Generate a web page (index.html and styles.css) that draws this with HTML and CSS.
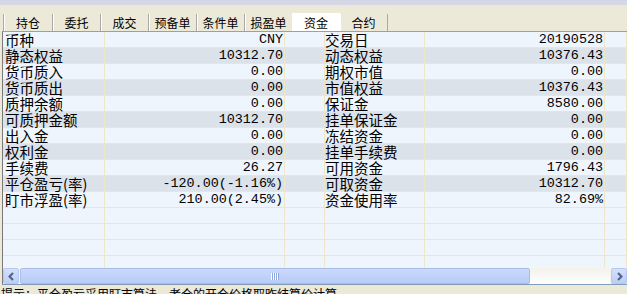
FILE: index.html
```html
<!DOCTYPE html>
<html lang="zh-CN">
<head>
  <meta charset="UTF-8" />
  <title>资金</title>
  <link rel="stylesheet" href="styles.css">
</head>
<body>
  <div class="topband"></div>
  <div class="tabbar">
    <div class="tab first">持仓</div>
    <div class="tab">委托</div>
    <div class="tab">成交</div>
    <div class="tab">预备单</div>
    <div class="tab">条件单</div>
    <div class="tab">损盈单</div>
    <div class="tab active">资金</div>
    <div class="tab last">合约</div>
  </div>

  <div class="grid">
    <div class="rows">
      <div class="row"><div class="c l">币种</div><div class="c v">CNY</div><div class="c e"></div><div class="c l2">交易日</div><div class="c v">20190528</div><div class="c e"></div></div>
      <div class="row alt"><div class="c l">静态权益</div><div class="c v">10312.70</div><div class="c e"></div><div class="c l2">动态权益</div><div class="c v">10376.43</div><div class="c e"></div></div>
      <div class="row"><div class="c l">货币质入</div><div class="c v">0.00</div><div class="c e"></div><div class="c l2">期权市值</div><div class="c v">0.00</div><div class="c e"></div></div>
      <div class="row alt"><div class="c l">货币质出</div><div class="c v">0.00</div><div class="c e"></div><div class="c l2">市值权益</div><div class="c v">10376.43</div><div class="c e"></div></div>
      <div class="row"><div class="c l">质押余额</div><div class="c v">0.00</div><div class="c e"></div><div class="c l2">保证金</div><div class="c v">8580.00</div><div class="c e"></div></div>
      <div class="row alt"><div class="c l">可质押金额</div><div class="c v">10312.70</div><div class="c e"></div><div class="c l2">挂单保证金</div><div class="c v">0.00</div><div class="c e"></div></div>
      <div class="row"><div class="c l">出入金</div><div class="c v">0.00</div><div class="c e"></div><div class="c l2">冻结资金</div><div class="c v">0.00</div><div class="c e"></div></div>
      <div class="row alt"><div class="c l">权利金</div><div class="c v">0.00</div><div class="c e"></div><div class="c l2">挂单手续费</div><div class="c v">0.00</div><div class="c e"></div></div>
      <div class="row"><div class="c l">手续费</div><div class="c v">26.27</div><div class="c e"></div><div class="c l2">可用资金</div><div class="c v">1796.43</div><div class="c e"></div></div>
      <div class="row alt"><div class="c l">平仓盈亏(率)</div><div class="c v">-120.00(-1.16%)</div><div class="c e"></div><div class="c l2">可取资金</div><div class="c v">10312.70</div><div class="c e"></div></div>
      <div class="row"><div class="c l">盯市浮盈(率)</div><div class="c v">210.00(2.45%)</div><div class="c e"></div><div class="c l2">资金使用率</div><div class="c v">82.69%</div><div class="c e"></div></div>
      <div class="row"><div class="c l"></div><div class="c v"></div><div class="c e"></div><div class="c l2"></div><div class="c v"></div><div class="c e"></div></div>
      <div class="row"><div class="c l"></div><div class="c v"></div><div class="c e"></div><div class="c l2"></div><div class="c v"></div><div class="c e"></div></div>
      <div class="row"><div class="c l"></div><div class="c v"></div><div class="c e"></div><div class="c l2"></div><div class="c v"></div><div class="c e"></div></div>
      <div class="row"><div class="c l"></div><div class="c v"></div><div class="c e"></div><div class="c l2"></div><div class="c v"></div><div class="c e"></div></div>
    </div>

    <div class="hscroll">
      <div class="sbtn">
        <svg width="9" height="9" viewBox="0 0 9 9"><path d="M6 1 L2.5 4.5 L6 8" fill="none" stroke="#4d6185" stroke-width="2"/></svg>
      </div>
      <div class="thumb">
        <svg width="9" height="7" viewBox="0 0 9 7"><path d="M0.5 0v7M2.5 0v7M4.5 0v7M6.5 0v7" stroke="#fff" stroke-width="1"/><path d="M1.5 0v7M3.5 0v7M5.5 0v7M7.5 0v7" stroke="#8fa8e0" stroke-width="1"/></svg>
      </div>
      <div class="track"></div>
      <div class="sbtn right">
        <svg width="9" height="9" viewBox="0 0 9 9"><path d="M3 1 L6.5 4.5 L3 8" fill="none" stroke="#4d6185" stroke-width="2"/></svg>
      </div>
    </div>
  </div>

  <div class="status">提示：平仓盈亏采用盯市算法，老仓的开仓价格取昨结算价计算</div>
</body>
</html>
```

FILE: styles.css
```css
html, body {
  margin: 0;
  padding: 0;
}
body {
  width: 627px;
  height: 294px;
  overflow: hidden;
  background: #ece9d8;
  font-family: "Noto Sans CJK SC", sans-serif;
  color: #000;
}
.topband {
  height: 5px;
  background: #d6d7e6;
}
.tabbar {
  display: flex;
  align-items: flex-end;
  height: 26px;
  padding-left: 3px;
}
.tab {
  width: 47px;
  height: 17px;
  border-left: 1px solid #a9a9a9;
  box-shadow: inset 1px 0 #fff;
  font-size: 12px;
  line-height: 17px;
  text-align: center;
}
.tab.first {
  width: 48px;
}
.tab.active {
  width: 48px;
  height: 18px;
  line-height: 19px;
  background: #fff;
  border-left: none;
  box-shadow: none;
}
.tab.last {
  border-left: none;
  border-right: 1px solid #a9a9a9;
}
.grid {
  border-top: 1px solid #8da2c2;
  border-left: 1px solid #7a7a7a;
  margin-left: 2px;
  border-bottom: 1px solid #7f9db9;
}
.rows {
  height: 236px;
  overflow: hidden;
}
.row {
  display: grid;
  grid-template-columns: 102px 180px 40px 100px 180px 1fr;
  height: 16px;
  background: #eff5fc;
}
.row.alt {
  background: #dce2e9;
}
.c {
  border-right: 1px solid #efe5c8;
  border-bottom: 1px solid #efe5c8;
  height: 15px;
  white-space: nowrap;
}
.l {
  padding-left: 2px;
  font-size: 14.5px;
  line-height: 15px;
}
.l2 {
  font-size: 14.5px;
  line-height: 15px;
}
.v {
  text-align: right;
  padding-right: 1px;
  font-family: "Liberation Mono", monospace;
  font-size: 13.4px;
  line-height: 16px;
}
.hscroll {
  display: flex;
  height: 16px;
  background: #f6f5f0;
}
.sbtn {
  width: 16px;
  height: 16px;
  margin-right: 1px;
  box-sizing: border-box;
  border: 1px solid #b6c8f0;
  border-radius: 2px;
  background: linear-gradient(#d4e0fc, #bccdf6);
  display: flex;
  align-items: center;
  justify-content: center;
}
.sbtn.right {
  margin: 0 0 0 1px;
}
.thumb {
  width: 510px;
  height: 16px;
  box-sizing: border-box;
  border: 1px solid #a9bdea;
  border-radius: 2px;
  background: linear-gradient(#cad9fc, #b9ccf8);
  display: flex;
  align-items: center;
  justify-content: center;
}
.track {
  flex: 1;
  background: linear-gradient(#f3f2ec, #fefefe);
}
.status {
  font-size: 12px;
  line-height: 14px;
  padding-left: 1px;
  padding-top: 2px;
  white-space: nowrap;
}
```
